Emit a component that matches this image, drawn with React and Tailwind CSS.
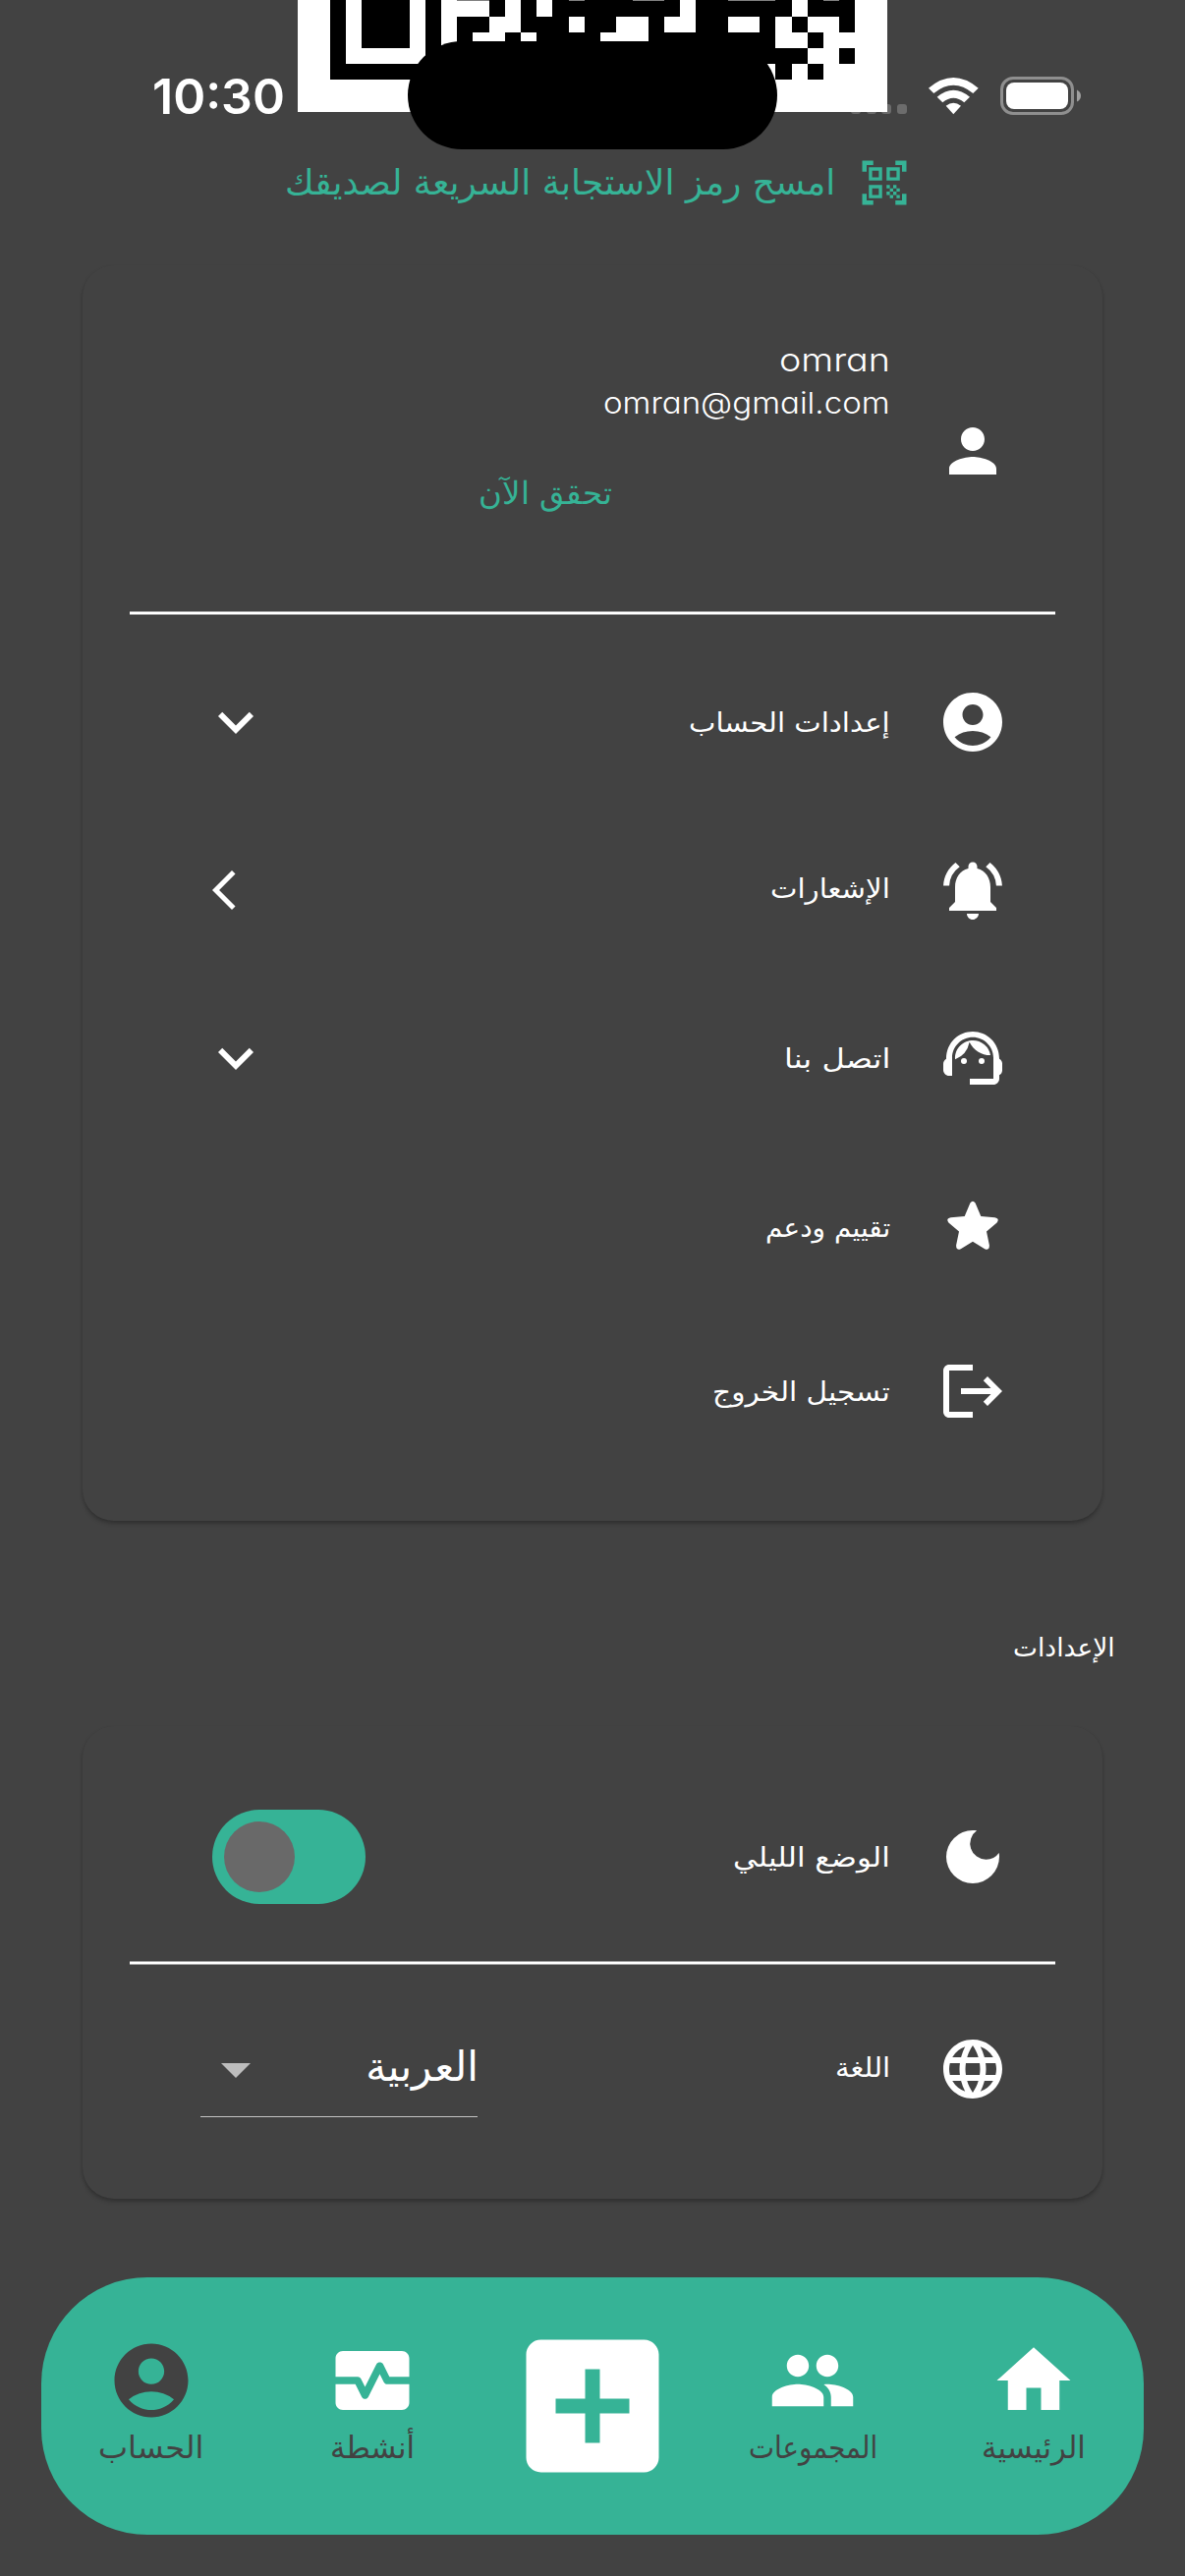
import React, { useLayoutEffect, useRef, useState } from "react";
import {
  MdQrCodeScanner, MdPerson, MdAccountCircle, MdNotificationsActive, MdSupportAgent, MdLogout,
  MdExpandMore, MdDarkMode, MdLanguage, MdArrowDropDown, MdMonitorHeart, MdAddBox,
  MdPeople, MdHome,
} from "react-icons/md";

/* Text set to an exact width; the glyphs are scaled horizontally to fill it. */
function Fit({ width, className = "", dir = "rtl", children }) {
  const ref = useRef(null);
  const [k, setK] = useState(1);
  useLayoutEffect(() => {
    setK(width / ref.current.offsetWidth);
  }, [width]);
  return (
    <span className={"flex shrink-0 whitespace-nowrap " + className} style={{ width }} dir={dir}>
      <span
        ref={ref}
        className={dir === "rtl" ? "block shrink-0 origin-right" : "block shrink-0 origin-left"}
        style={{ transform: `scaleX(${k})` }}
      >
        {children}
      </span>
    </span>
  );
}

/* Visible bottom rows of the code, one string per row of modules. */
const QR = [
  "#.###.#...#.#.########.######.###",
  "#.###.#.##..###.##..#..##..#.#..#",
  "#.###.#.#..#.####...########..#..",
  "#.....#.######################..#",
  "#######.###################.#.#..",
];

function QrCode() {
  const m = 16.212;
  return (
    <svg width="600" height="114" viewBox="0 0 600 114" shapeRendering="crispEdges">
      <rect width="600" height="114" fill="#fff" />
      {QR.map((row, r) =>
        [...row].map((c, i) =>
          c === "#" ? (
            <rect key={r + "-" + i} x={32.5 + i * m} y={0.4 + r * m} width={m} height={m} fill="#000" />
          ) : null
        )
      )}
      {[[8, 2], [15, 1], [19, 2], [25, 3], [31, 1]].map(([s, n]) => (
        <rect key={s} x={32.5 + s * m} y="0" width={n * m} height="1" fill="#808080" />
      ))}
    </svg>
  );
}

function Star() {
  return (
    <svg width="72" height="72" viewBox="0 0 72 72" fill="#fff">
      <path d="M33.400 12.600Q36 8.800 38.600 12.600L44.300 25.900L58.400 27.200Q63.700 28.200 60.600 32.400L50 41.400L52.900 55.400Q53 61.200 48.200 59.200L36 51.700L23.800 59.200Q19 61.200 19.100 55.400L22 41.400L11.400 32.400Q8.300 28.200 13.600 27.200L27.700 25.900Z" />
    </svg>
  );
}

const rows = [
  { label: "إعدادات الحساب", w: 205, icon: <MdAccountCircle size={72} />, end: "down", h: "h-[172px]", up: "mt-[2px]" },
  { label: "الإشعارات", w: 122, icon: <MdNotificationsActive size={72} />, end: "left", h: "h-[170px]", up: "-mt-[2px]" },
  { label: "اتصل بنا", w: 108, icon: <MdSupportAgent size={72} />, end: "down", h: "h-[172px]", up: "mt-[2px]" },
  { label: "تقييم ودعم", w: 127, icon: <Star />, h: "h-[170px]", up: "mt-[3px]" },
  { label: "تسجيل الخروج", w: 181, icon: <MdLogout size={72} />, h: "h-[166px]", up: "mt-[2px]" },
];

const tabs = [
  { label: "الرئيسية", w: 106, icon: <MdHome size={90} /> },
  { label: "المجموعات", w: 131, icon: <MdPeople size={90} /> },
  { add: true },
  { label: "أنشطة", w: 86, icon: <MdMonitorHeart size={90} /> },
  { label: "الحساب", w: 107, icon: <MdAccountCircle size={90} />, active: true },
];

const card =
  "mx-auto w-[1038px] rounded-[32px] bg-[#424242] shadow-[0_3px_4px_rgba(0,0,0,0.22),0_2px_3px_rgba(0,0,0,0.06)]";

export default function App() {
  return (
    <div
      dir="rtl"
      className="relative flex h-[2622px] w-[1206px] flex-col overflow-hidden bg-[#424242] text-white [font-family:'DejaVu_Sans',sans-serif]"
    >
      <div className="absolute top-[106px] left-[866px] flex gap-[5.500px]" dir="ltr">
        {[0, 1, 2, 3].map((i) => (
          <i key={i} className="size-[10px] rounded-[3px] bg-[#6c6c6c]" />
        ))}
      </div>
      <header className="relative flex h-[114px] shrink-0 justify-center">
        <QrCode />
      </header>

      {/* status bar, floating over the scrolled content */}
      <div className="absolute top-[42px] left-[415px] h-[110px] w-[376px] rounded-[55px] bg-black" />
      <div className="absolute top-[68px] left-[155px] [font-family:Inter,sans-serif] text-[50px] leading-[60px] font-semibold">
        <Fit dir="ltr" width={135}>10:30</Fit>
      </div>
      <svg className="absolute top-[70px] left-[940px]" width="170" height="56" viewBox="940 70 170 56">
        <g fill="#fff">
          <path d="M945 89.700Q970.300 68.300 995.700 89.700L990.300 95.100Q970.300 78.500 950.300 95.100Z" />
          <path d="M953.700 98.700Q970.300 84.700 987 98.700L981.300 104.300Q970.300 95.300 959.300 104.300Z" />
          <path d="M962.700 107.700Q970.300 101.700 978 107.700L970.300 116.300Z" />
        </g>
        <rect x="1019.500" y="79.500" width="72" height="36" rx="11.500" fill="none" stroke="#8f8f8f" strokeWidth="3" />
        <rect x="1024" y="84" width="63" height="27" rx="8" fill="#fff" />
        <path d="M1096 91.500Q1100 93.500 1100 97.500T1096 103.500Z" fill="#a0a0a0" />
      </svg>

      <div className="flex h-[156px] shrink-0 gap-[23px] pr-[279px] pt-[45px] text-[#36b396]">
        <MdQrCodeScanner size={54} className="shrink-0" />
        <Fit width={560} className="text-[36px] leading-[54px]">امسح رمز الاستجابة السريعة لصديقك</Fit>
      </div>

      <section className={card + " h-[1278px] shrink-0"}>
        <div className="flex h-[352px] pr-[96px]">
          <MdPerson size={72} className="mt-[153px] shrink-0" />
          <div className="mr-[48px] mt-[72px] flex flex-col [font-family:Inter,sans-serif] [font-weight:350]">
            <Fit dir="ltr" width={113} className="text-[33px] leading-[48px] [font-feature-settings:'cv11']">omran</Fit>
            <Fit dir="ltr" width={292} className="mt-[2px] text-[30px] leading-[36px] [font-feature-settings:'cv11']">omran@gmail.com</Fit>
            <Fit width={136} className="mr-[283px] mt-[50px] text-[32px] leading-[48px] text-[#36b396] [font-family:'DejaVu_Sans',sans-serif]">تحقق الآن</Fit>
          </div>
        </div>
        <div className="mx-[48px] h-[4px] border-y border-[#a0a0a0] bg-white" />
        <div className="flex flex-col pt-[23px]">
          {rows.map((r) => (
            <div key={r.label} className={"flex items-center pr-[96px] pl-[120px] " + r.h}>
              {r.icon}
              <div className="mr-[48px] flex-1">
                <Fit width={r.w} className={"text-[27px] leading-[36px] " + r.up}>{r.label}</Fit>
              </div>
              {r.end === "down" && <MdExpandMore size={72} />}
              {r.end === "left" && (
                <svg width="48" height="48" viewBox="0 0 24 24" fill="#fff">
                  <path d="M17.770 3.770L16 2 6 12l10 10 1.770-1.770L9.540 12z" />
                </svg>
              )}
            </div>
          ))}
        </div>
      </section>

      <h2 className="h-[209px] shrink-0 pr-[71px] pt-[111px]">
        <Fit width={104} className="text-[26px] leading-[36px]">الإعدادات</Fit>
      </h2>

      <section className={card + " h-[481px] shrink-0"}>
        <div className="flex h-[239px] items-center pr-[96px] pl-[132px] pt-[27px]">
          <MdDarkMode size={72} />
          <div className="mr-[48px] flex-1">
            <Fit width={160} className="mt-[2px] text-[27px] leading-[36px]">الوضع الليلي</Fit>
          </div>
          <div className="flex h-[96px] w-[156px] items-center justify-end rounded-full bg-[#36b396] px-[12px]">
            <div className="size-[72px] rounded-full bg-[#696969]" />
          </div>
        </div>
        <div className="mx-[48px] h-[4px] border-y border-[#a0a0a0] bg-white" />
        <div className="flex h-[212px] items-center pr-[96px] pl-[120px]">
          <MdLanguage size={72} />
          <div className="mr-[48px] flex-1">
            <Fit width={56} className="-mt-[2px] text-[27px] leading-[36px]">اللغة</Fit>
          </div>
          <div className="mt-[4px] flex h-[94px] w-[282px] items-center justify-between border-b border-[#c4c4c4]">
            <Fit width={115} className="-mt-[8px] -mr-[1px] text-[42px] leading-[60px]">العربية</Fit>
            <MdArrowDropDown size={72} className="-mt-[4px] text-[#bdbdbd]" />
          </div>
        </div>
      </section>

      <nav className="mx-auto mt-[80px] flex h-[262px] w-[1122px] shrink-0 rounded-[108px] bg-[#36b396]">
        {tabs.map((t, i) =>
          t.add ? (
            <div key={i} className="flex flex-1 items-center justify-center">
              <MdAddBox size={180} className="shrink-0" />
            </div>
          ) : (
            <div key={i} className="flex flex-1 flex-col items-center pt-[60px]">
              <span className={t.active ? "text-[#424242]" : "text-white"}>{t.icon}</span>
              <Fit width={t.w} className="mt-[2px] text-[31px] leading-[42px] text-[#424242]">{t.label}</Fit>
            </div>
          )
        )}
      </nav>
    </div>
  );
}
